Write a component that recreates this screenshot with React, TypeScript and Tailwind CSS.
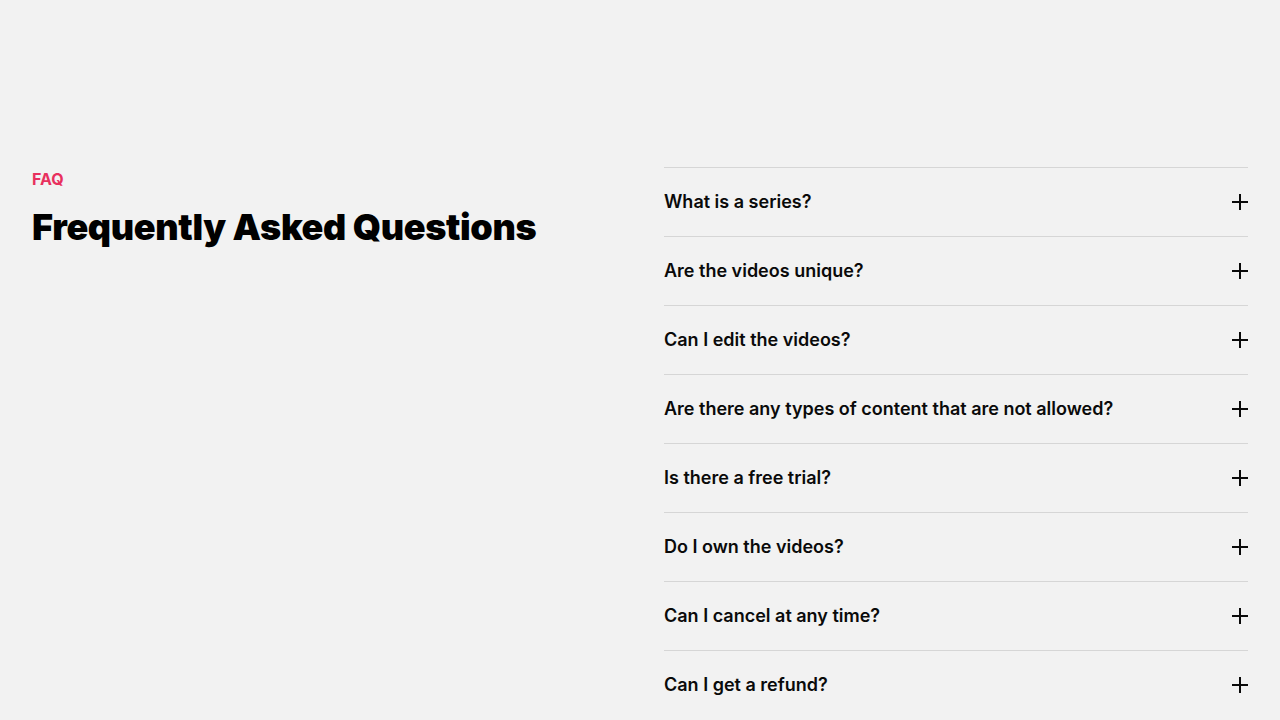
import React from "react";

const questions = [
  "What is a series?",
  "Are the videos unique?",
  "Can I edit the videos?",
  "Are there any types of content that are not allowed?",
  "Is there a free trial?",
  "Do I own the videos?",
  "Can I cancel at any time?",
  "Can I get a refund?",
];

function PlusIcon() {
  return (
    <svg width="16" height="16" viewBox="0 0 16 16" fill="none" stroke="#0a0a0a" strokeWidth="2" strokeLinecap="butt">
      <line x1="8" y1="0" x2="8" y2="16" />
      <line x1="0" y1="8" x2="16" y2="8" />
    </svg>
  );
}

export default function App() {
  return (
    <div className="min-h-screen bg-[#f2f2f2] text-[#0a0a0a]" style={{ fontFamily: "Inter, 'Noto Sans', sans-serif" }}>
      <div className="grid grid-cols-2 gap-12 px-8 pt-[167px]">
        <div>
          <p className="text-base leading-6 font-bold text-[#e8305e]">FAQ</p>
          <h2 className="mt-4 text-4xl leading-10 font-black tracking-[-0.01em] text-black">Frequently Asked Questions</h2>
        </div>
        <div>
          {questions.map((q) => (
            <div key={q} className="flex items-center justify-between border-t border-[#d6d6d6] py-5">
              <span className="text-lg leading-7 font-semibold">{q}</span>
              <PlusIcon />
            </div>
          ))}
        </div>
      </div>
    </div>
  );
}
